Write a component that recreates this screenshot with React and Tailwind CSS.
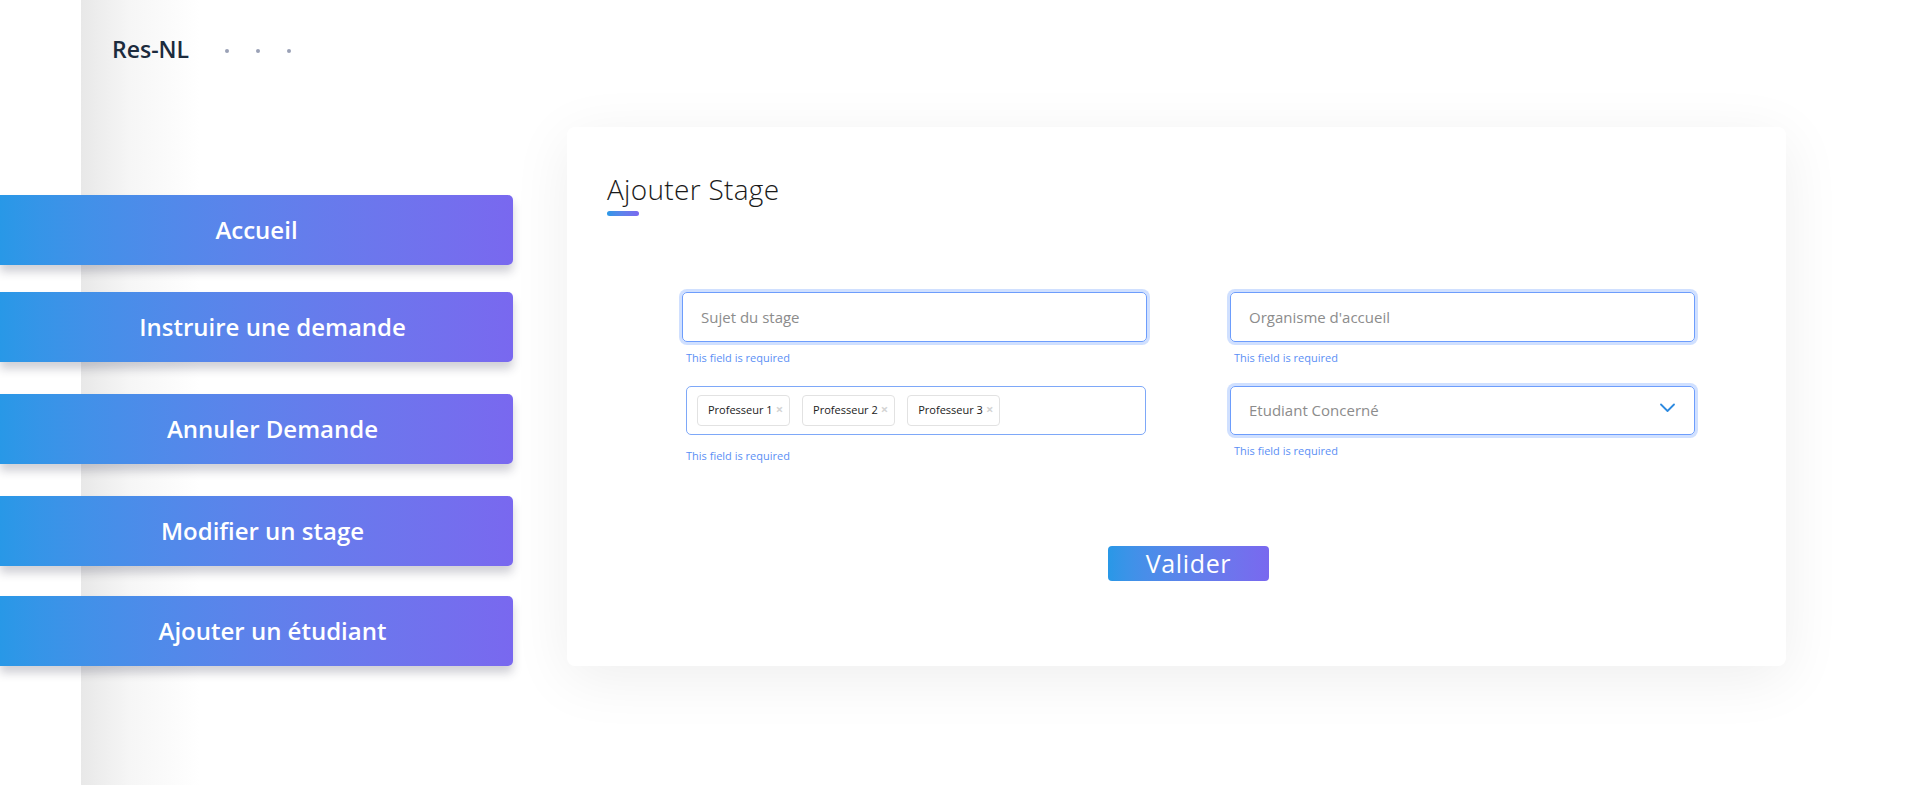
import React from "react";

const navItems = [
  { label: "Accueil", pad: "pl-0", mt: "mt-0" },
  { label: "Instruire une demande", pad: "pl-[32px]", mt: "mt-[27px]" },
  { label: "Annuler Demande", pad: "pl-[32px]", mt: "mt-[32px]" },
  { label: "Modifier un stage", pad: "pl-[12px]", mt: "mt-[32px]" },
  { label: "Ajouter un étudiant", pad: "pl-[32px]", mt: "mt-[30px]" },
];

const profs = ["Professeur 1", "Professeur 2", "Professeur 3"];

const Required = ({ className }) => (
  <p className={`text-[11px] leading-[16px] text-[#5b8ff5] ${className}`}>
    This field is required
  </p>
);

const App = () => {
  return (
    <div
      className="relative h-[785px] w-full overflow-hidden bg-[linear-gradient(to_right,#ffffff_81px,#e8e8e8_81px,#f6f6f6_130px,#ffffff_200px)]"
      style={{ fontFamily: '"Open Sans", "Noto Sans", sans-serif' }}
    >
      {/* Header */}
      <header className="flex h-[127px] items-start pl-[112px] pt-[34px]">
        <span className="text-[23px] font-semibold leading-[30px] text-[#1c2b3d]">
          Res-NL
        </span>
        <div className="ml-[36px] mt-[15px] flex gap-[27px]">
          <span className="h-[4px] w-[4px] rounded-full bg-[#9aa1b6]" />
          <span className="h-[4px] w-[4px] rounded-full bg-[#9aa1b6]" />
          <span className="h-[4px] w-[4px] rounded-full bg-[#9aa1b6]" />
        </div>
      </header>

      <div className="flex">
        {/* Nav */}
        <nav className="flex w-[513px] flex-col pt-[68px]">
          {navItems.map((item) => (
            <button
              key={item.label}
              className={`${item.mt} ${item.pad} flex h-[70px] w-[513px] items-center justify-center rounded-r-[5px] bg-gradient-to-r from-[#2898e7] to-[#7968ef] text-[24px] font-semibold text-white shadow-[0_7px_10px_rgba(40,40,70,0.22)]`}
            >
              {item.label}
            </button>
          ))}
        </nav>

        {/* Card */}
        <div className="ml-[54px] h-[539px] w-[1219px] rounded-[8px] bg-white px-[40px] pt-[46px] shadow-[0_12px_60px_rgba(0,0,0,0.07)]">
          <h2 className="text-[28px] font-light leading-[32px] tracking-[0.3px] text-[#1a1a1a]">
            Ajouter Stage
          </h2>
          <div className="mt-[6px] h-[5px] w-[32px] rounded-full bg-gradient-to-r from-[#2898e7] to-[#7968ef]" />

          <div className="ml-[75px] mt-[76px] w-[1013px]">
            <div className="grid grid-cols-[465px_465px] gap-x-[83px]">
              {/* Left column */}
              <div className="flex flex-col">
                <input
                  placeholder="Sujet du stage"
                  className="h-[50px] w-full rounded-[5px] border border-[#6d9dfc] px-[18px] text-[15px] text-[#333] shadow-[0_0_0_3px_rgba(120,165,255,0.35)] outline-none placeholder:text-[#8c8c8c]"
                />
                <Required className="ml-[4px] mt-[8px]" />
                <div className="ml-[4px] mt-[20px] flex h-[49px] w-[460px] items-center gap-[12px] rounded-[5px] border border-[#7ea8f8] px-[10px]">
                  {profs.map((p) => (
                    <span
                      key={p}
                      className="flex h-[31px] items-center rounded-[4px] border border-[#e2e2e2] pl-[10px] pr-[6px] text-[11px] text-[#222]"
                    >
                      {p}
                      <span className="ml-[3px] -mt-[2px] text-[13px] font-bold leading-none text-[#d4d4d4]">
                        ×
                      </span>
                    </span>
                  ))}
                </div>
                <Required className="ml-[4px] mt-[13px]" />
              </div>

              {/* Right column */}
              <div className="flex flex-col">
                <input
                  placeholder="Organisme d'accueil"
                  className="h-[50px] w-full rounded-[5px] border border-[#6d9dfc] px-[18px] text-[15px] text-[#333] shadow-[0_0_0_3px_rgba(120,165,255,0.35)] outline-none placeholder:text-[#8c8c8c]"
                />
                <Required className="ml-[4px] mt-[8px]" />
                <div className="mt-[20px] flex h-[49px] w-full items-center justify-between rounded-[5px] border border-[#6d9dfc] pl-[18px] pr-[19px] shadow-[0_0_0_3px_rgba(120,165,255,0.35)]">
                  <span className="text-[15px] text-[#8c8c8c]">
                    Etudiant Concerné
                  </span>
                  <svg
                    width="15"
                    height="10"
                    viewBox="0 0 15 10"
                    fill="none"
                    className="-mt-[6px]"
                  >
                    <polyline
                      points="1,1.5 7.5,8 14,1.5"
                      stroke="#2d8ae0"
                      strokeWidth="1.8"
                      strokeLinecap="round"
                      strokeLinejoin="round"
                    />
                  </svg>
                </div>
                <Required className="ml-[4px] mt-[8px]" />
              </div>
            </div>

            <div className="mt-[82px] flex justify-center">
              <button className="h-[35px] w-[161px] rounded-[4px] bg-gradient-to-r from-[#2898e7] to-[#7968ef] text-[25px] leading-[35px] tracking-wide text-white">
                Valider
              </button>
            </div>
          </div>
        </div>
      </div>
    </div>
  );
};

export default App;
